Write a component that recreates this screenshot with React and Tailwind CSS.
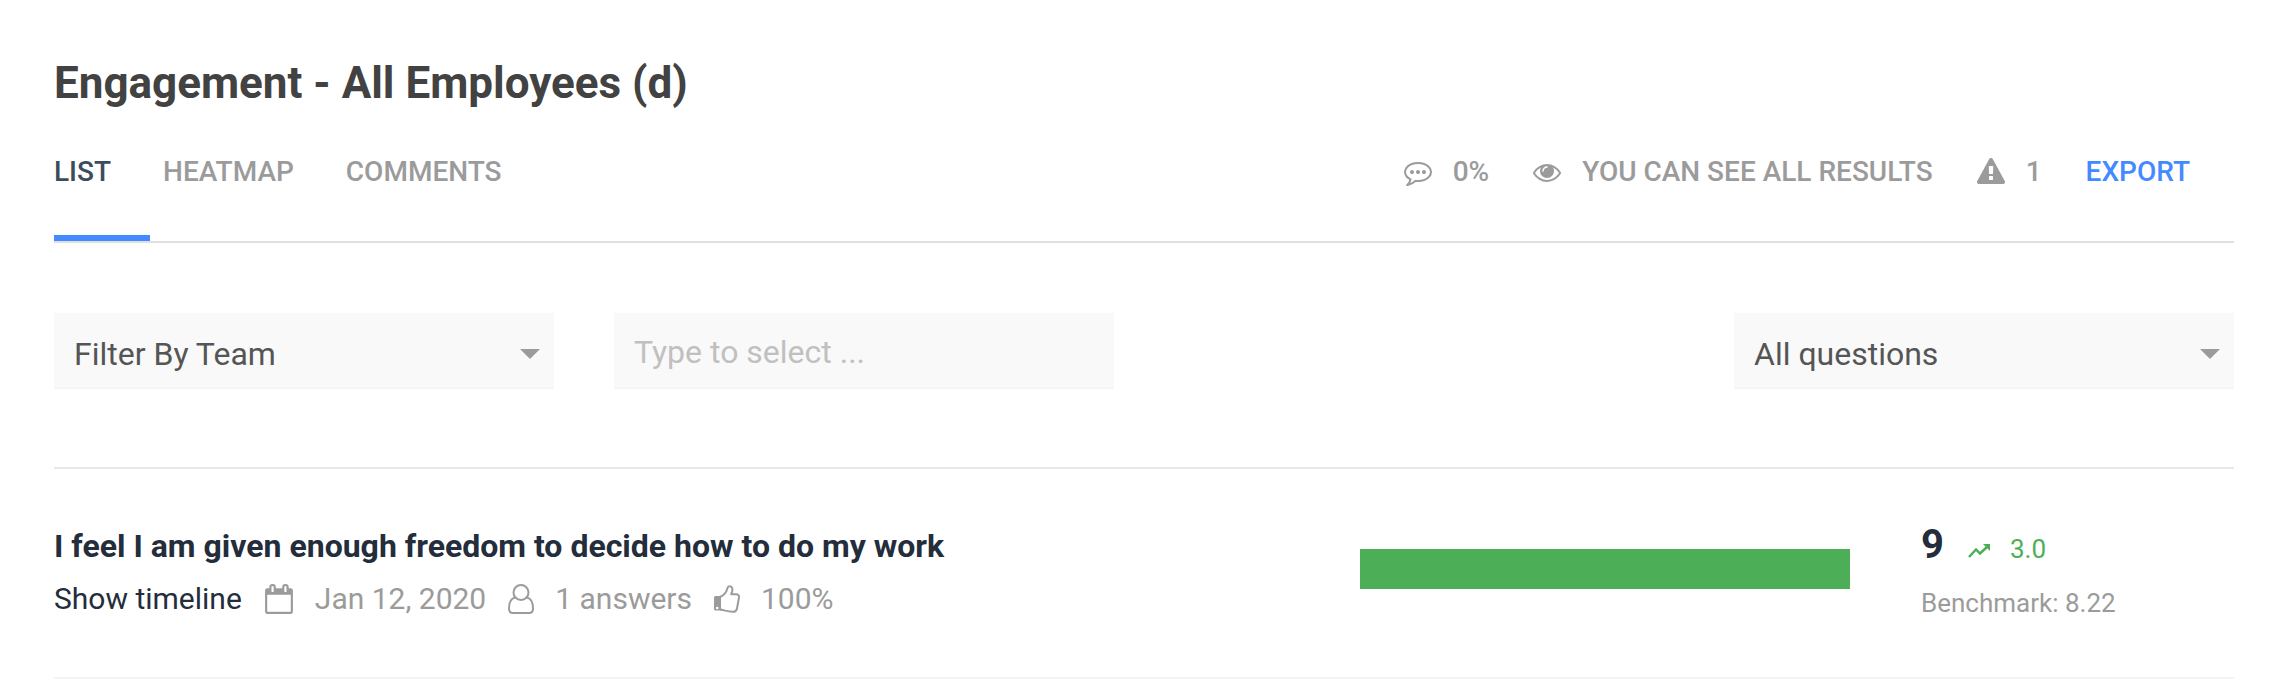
const icons = {
  comment:
    'M640 896q0 53-37.5 90.5t-90.5 37.5-90.5-37.5-37.5-90.5 37.5-90.5 90.5-37.5 90.5 37.5 37.5 90.5zm384 0q0 53-37.5 90.5t-90.5 37.5-90.5-37.5-37.5-90.5 37.5-90.5 90.5-37.5 90.5 37.5 37.5 90.5zm384 0q0 53-37.5 90.5t-90.5 37.5-90.5-37.5-37.5-90.5 37.5-90.5 90.5-37.5 90.5 37.5 37.5 90.5zm-512-512q-204 0-381.5 69.5t-282 187.5-104.5 255q0 112 71.5 213.5t201.5 175.5l87 50-27 96q-24 91-70 172 152-63 275-171l43-38 57 6q69 8 130 8 204 0 381.5-69.5t282-187.5 104.5-255-104.5-255-282-187.5-381.5-69.5zm896 512q0 174-120 321.5t-326 233-450 85.5q-70 0-145-8-198 175-460 242-49 14-114 22h-5q-15 0-27-10.5t-16-27.5v-1q-3-4-.5-12t2-10 4.5-9.5l6-9 7-8.5 8-9q7-8 31-34.5t34.5-38 31-39.5 32.5-51 27-59 26-76q-157-89-247.5-220t-90.5-281q0-174 120-321.5t326-233 450-85.5 450 85.5 326 233 120 321.5z',
  eye: 'M1664 960q-152-236-381-353 61 104 61 225 0 185-131.5 316.5t-316.5 131.5-316.5-131.5-131.5-316.5q0-121 61-225-229 117-381 353 133 205 333.5 326.5t434.5 121.5 434.5-121.5 333.5-326.5zm-720-384q0-20-14-34t-34-14q-125 0-214.5 89.5t-89.5 214.5q0 20 14 34t34 14 34-14 14-34q0-86 61-147t147-61q20 0 34-14t14-34zm848 384q0 34-20 69-140 230-376.5 368.5t-499.5 138.5-499.5-139-376.5-368q-20-35-20-69t20-69q140-229 376.5-368t499.5-139 499.5 139 376.5 368q20 35 20 69z',
  warning:
    'M1024 1375v-190q0-14-9.5-23.5t-22.5-9.5h-192q-13 0-22.5 9.5t-9.5 23.5v190q0 14 9.5 23.5t22.5 9.5h192q13 0 22.5-9.5t9.5-23.5zm-2-374l18-459q0-12-10-19-13-11-24-11h-220q-11 0-24 11-10 7-10 21l17 457q0 10 10 16.5t24 6.5h185q14 0 23.5-6.5t10.5-16.5zm-14-934l768 1408q35 63-2 126-17 29-46.5 46t-63.5 17h-1536q-34 0-63.5-17t-46.5-46q-37-63-2-126l768-1408q17-31 47-49t65-18 65 18 47 49z',
  calendar:
    'M192 1664h1408v-1024h-1408v1024zm384-1216v-288q0-14-9-23t-23-9h-64q-14 0-23 9t-9 23v288q0 14 9 23t23 9h64q14 0 23-9t9-23zm768 0v-288q0-14-9-23t-23-9h-64q-14 0-23 9t-9 23v288q0 14 9 23t23 9h64q14 0 23-9t9-23zm384-64v1280q0 52-38 90t-90 38h-1408q-52 0-90-38t-38-90v-1280q0-52 38-90t90-38h128v-96q0-66 47-113t113-47h64q66 0 113 47t47 113v96h384v-96q0-66 47-113t113-47h64q66 0 113 47t47 113v96h128q52 0 90 38t38 90z',
};

const tabs = ['List', 'Heatmap', 'Comments'];

const Icon = ({ name, className }) => (
  <svg viewBox="0 0 1792 1792" fill="currentColor" className={className} aria-hidden="true">
    <path d={icons[name]} />
  </svg>
);

const UserIcon = () => (
  <svg viewBox="0 0 26 30" className="w-[26px] h-[30px]" fill="none" stroke="currentColor" strokeWidth="2" aria-hidden="true">
    <circle cx="13" cy="8.5" r="7.5" />
    <path d="M7 13.500C3 14.500 1 18.500 1 24.500C1 27.500 2.800 29 5 29H21C23.200 29 25 27.500 25 24.500C25 18.500 23 14.500 19 13.500" />
  </svg>
);

const ThumbIcon = () => (
  <svg viewBox="0 0 26 28" className="w-[26px] h-[28px]" fill="none" stroke="currentColor" strokeWidth="2" strokeLinejoin="round" aria-hidden="true">
    <path d="M6 12C10 10.500 12.500 7 13.500 3C14 1.200 15.500 1 17 1.700C19 2.800 18.600 6 17.200 9.200H22.500C24.600 9.400 25.200 11 24.900 13L23 23.500C22.500 26 21 27 18.500 26.800C14 26.500 10 25.200 6 24.500" />
    <path fillRule="evenodd" fill="currentColor" stroke="none" d="M1.500 11H7V25.500H1.500Q0 25.500 0 24V12.500Q0 11 1.500 11ZM3.200 21.700A1.300 1.300 0 1 0 3.200 24.300A1.300 1.300 0 1 0 3.200 21.700Z" />
  </svg>
);

const TrendIcon = () => (
  <svg viewBox="0 0 22 14" className="mb-[3px] w-[22px] h-[14px]" fill="none" stroke="currentColor" strokeWidth="2.4" aria-hidden="true">
    <path d="M1 13L8 5.500L12 9.500L19 3" />
    <path d="M15 0H22V7Z" fill="currentColor" stroke="none" />
  </svg>
);

const Select = ({ label, options }) => (
  <div className="relative w-[500px]">
    <select
      aria-label={label}
      className="block w-full h-[76px] appearance-none bg-[#f9f9f9] border-b-2 border-[#f5f5f5] pl-5 pr-16 pt-2 text-[32px] text-[#555555]"
    >
      {options.map((option) => (
        <option key={option}>{option}</option>
      ))}
    </select>
    <svg viewBox="0 0 20 10" className="pointer-events-none absolute right-[14px] top-9 w-5 h-[10px] text-[#9b9b9b]" aria-hidden="true">
      <path d="M0 0H20L10 10Z" fill="currentColor" />
    </svg>
  </div>
);

const App = () => {
  return (
    <div className="min-h-screen bg-white pl-[54px] pr-[60px] pt-[57px] font-['Roboto',sans-serif]">
      <h1 className="text-[44px] leading-[52px] font-bold text-[#424242]">Engagement - All Employees (d)</h1>

      {/* Tabs and survey status */}
      <div className="mt-9 flex justify-between border-b-2 border-[#e0e0e0] text-[28px] leading-[52px] font-medium uppercase text-[#9b9b9b]">
        <nav className="flex gap-[13px]">
          {tabs.map((tab, index) => (
            <button
              key={tab}
              className={
                index === 0
                  ? 'h-24 pb-9 pr-[39px] uppercase border-b-6 border-[#448aff] text-[#3d4c5c]'
                  : 'h-24 pb-9 pr-[39px] uppercase border-b-6 border-transparent'
              }
            >
              {tab}
            </button>
          ))}
        </nav>
        <div className="flex h-[53px] items-center gap-11 pr-11">
          <span className="flex items-center gap-[21px]">
            <Icon name="comment" className="size-7" />
            0%
          </span>
          <span className="flex items-center gap-[21px]">
            <Icon name="eye" className="size-7" />
            You can see all results
          </span>
          <span className="flex items-center gap-[21px]">
            <Icon name="warning" className="size-7" />
            1
          </span>
          <a href="#export" className="text-[#448aff]">Export</a>
        </div>
      </div>

      {/* Filters */}
      <div className="mt-[70px] flex justify-between">
        <div className="flex gap-15">
          <Select label="Team filter" options={['Filter By Team']} />
          <input
            type="text"
            aria-label="Team"
            placeholder="Type to select ..."
            className="w-[500px] h-[76px] bg-[#f9f9f9] border-b-2 border-[#f5f5f5] px-5 pt-1 text-[32px] text-[#555555] placeholder:text-[#c0c0c0]"
          />
        </div>
        <Select label="Questions" options={['All questions']} />
      </div>

      {/* Question row */}
      <div className="mt-[78px] flex border-y-2 border-t-[#e8e8e8] border-b-[#f4f4f4] pt-[50px] pb-[46px]">
        <div className="flex-1">
          <h2 className="text-[32px] leading-[54px] font-bold text-[#232d3b]">
            I feel I am given enough freedom to decide how to do my work
          </h2>
          <div className="flex items-center gap-[22px] text-[30px] leading-[52px] text-[#9b9b9b]">
            <button className="text-[#232d3b]">Show timeline</button>
            <span className="flex items-center gap-[21px]">
              <Icon name="calendar" className="size-[30px]" />
              Jan 12, 2020
            </span>
            <span className="flex items-center gap-[21px]">
              <UserIcon />
              1 answers
            </span>
            <span className="flex items-center gap-[21px]">
              <ThumbIcon />
              100%
            </span>
          </div>
        </div>
        <div className="w-[490px] pt-[30px]">
          <div className="h-10 bg-[#4caf57]" />
        </div>
        <div className="w-[384px] pl-[71px]">
          <div className="flex items-baseline gap-6 text-[26px] leading-[52px] text-[#4caf57]">
            <strong className="text-[40px] font-bold text-[#232d3b]">9</strong>
            <span className="flex items-baseline gap-5">
              <TrendIcon />
              3.0
            </span>
          </div>
          <p className="text-[26px] leading-[56px] text-[#9b9b9b]">Benchmark: 8.22</p>
        </div>
      </div>
    </div>
  );
};

export default App;
